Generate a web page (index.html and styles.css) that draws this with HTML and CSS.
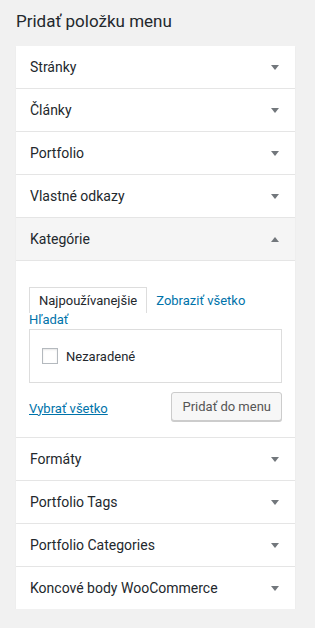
FILE: index.html
```html
<!DOCTYPE html>
<html lang="sk">
<head>
    <meta charset="UTF-8">
    <meta name="viewport" content="width=device-width, initial-scale=1.0">
    <title>Pridať položku menu</title>
    <link rel="stylesheet" href="styles.css">
</head>
<body>
    <div class="side">
        <h2 class="side-title">Pridať položku menu</h2>

        <div class="accordion">
            <div class="acc-row"><span>Stránky</span><i class="arrow"></i></div>
            <div class="acc-row"><span>Články</span><i class="arrow"></i></div>
            <div class="acc-row"><span>Portfolio</span><i class="arrow"></i></div>
            <div class="acc-row"><span>Vlastné odkazy</span><i class="arrow"></i></div>

            <!-- Open section -->
            <div class="acc-row open"><span>Kategórie</span><i class="arrow up"></i></div>
            <div class="acc-body">
                <div class="tabs">
                    <span class="tab active">Najpoužívanejšie</span>
                    <a href="#" class="tab-link">Zobraziť všetko</a>
                    <a href="#" class="tab-link">Hľadať</a>
                </div>
                <div class="checklist">
                    <label class="check"><span class="box"></span>Nezaradené</label>
                </div>
                <div class="actions">
                    <a href="#" class="select-all">Vybrať všetko</a>
                    <button type="button">Pridať do menu</button>
                </div>
            </div>

            <div class="acc-row"><span>Formáty</span><i class="arrow"></i></div>
            <div class="acc-row"><span>Portfolio Tags</span><i class="arrow"></i></div>
            <div class="acc-row"><span>Portfolio Categories</span><i class="arrow"></i></div>
            <div class="acc-row last"><span>Koncové body WooCommerce</span><i class="arrow"></i></div>
        </div>
    </div>
</body>
</html>
```

FILE: styles.css
```css
/* General */
body {
    margin: 0;
    background-color: #f1f1f1;
    font-family: Roboto, 'Open Sans', sans-serif;
    color: #23282d;
    font-size: 13px;
}

.side {
    padding: 8px 20px 0 16px;
}

.side-title {
    margin: 0 0 11px;
    font-size: 17px;
    font-weight: 400;
    line-height: 27px;
}

/* Accordion */
.accordion {
    background-color: #fff;
    box-shadow: 0 1px 1px rgba(0, 0, 0, 0.08);
}

.acc-row {
    display: flex;
    align-items: center;
    justify-content: space-between;
    height: 42px;
    padding: 0 16px 0 14px;
    border-bottom: 1px solid #e5e5e5;
    font-size: 14px;
}

.acc-row.last {
    border-bottom: none;
}

.acc-row.open {
    background-color: #f5f5f5;
}

.arrow {
    width: 0;
    height: 0;
    border-left: 4px solid transparent;
    border-right: 4px solid transparent;
    border-top: 5px solid #72777c;
}

.arrow.up {
    border-top: none;
    border-bottom: 5px solid #72777c;
}

/* Open body */
.acc-body {
    padding: 26px 13px 16px 13px;
    border-bottom: 1px solid #e5e5e5;
}

.tabs {
    display: flex;
    flex-wrap: wrap;
    align-items: flex-end;
}

.tab {
    padding: 3px 9px 2px;
    border: 1px solid #ddd;
    border-bottom: none;
    line-height: 20px;
}

.tab-link {
    margin-left: 9px;
    color: #0073aa;
    text-decoration: none;
    line-height: 20px;
    padding-bottom: 2px;
}

.tab-link:last-child {
    margin-left: 0;
    margin-top: -2px;
    padding-bottom: 0;
    line-height: 18px;
}

.checklist {
    height: 52px;
    border: 1px solid #ddd;
    padding: 0 12px;
    display: flex;
    align-items: center;
}

.check {
    display: flex;
    align-items: center;
    gap: 8px;
}

.box {
    width: 14px;
    height: 14px;
    border: 1px solid #b4b9be;
    box-shadow: inset 0 1px 2px rgba(0, 0, 0, 0.1);
}

.actions {
    display: flex;
    align-items: center;
    justify-content: space-between;
    margin-top: 9px;
}

.select-all {
    color: #0073aa;
    margin-top: 3px;
}

button {
    font-family: inherit;
    font-size: 13px;
    color: #555;
    height: 29px;
    padding: 0 10px;
    background-color: #f7f7f7;
    border: 1px solid #ccc;
    border-radius: 3px;
    box-shadow: 0 1px 0 #ccc;
}
```
